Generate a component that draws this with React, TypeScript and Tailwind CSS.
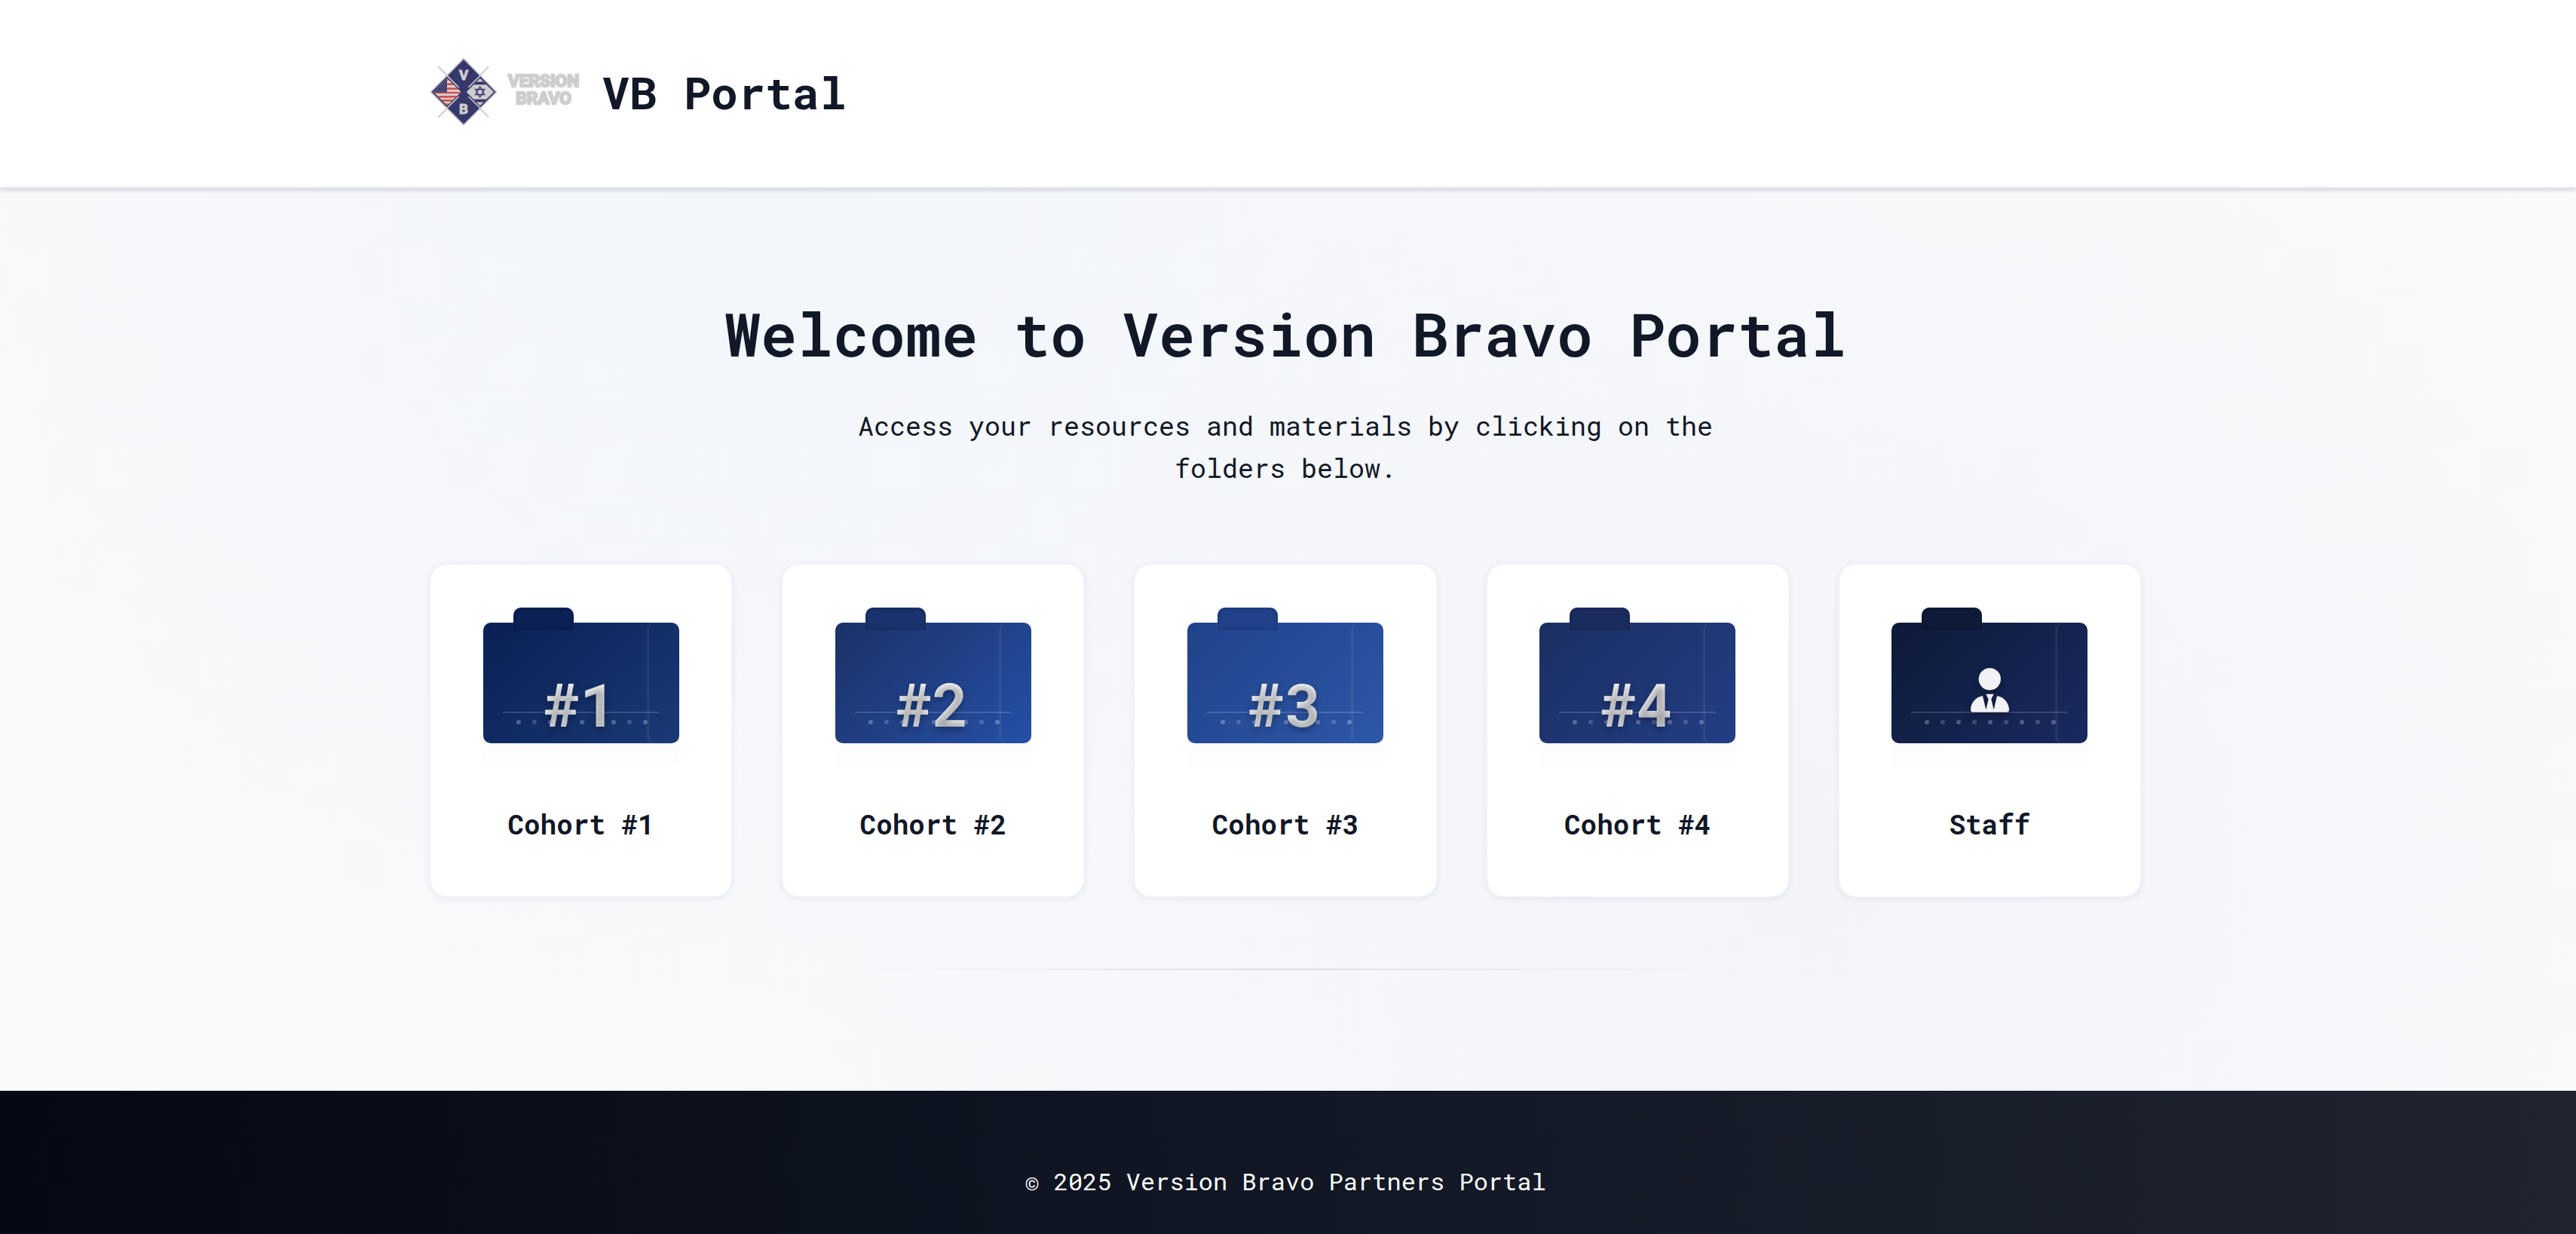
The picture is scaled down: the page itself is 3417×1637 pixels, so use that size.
import { useId } from "react";

type Folder = { label: string; mark?: string; body: string; tab: string };

const folders: Folder[] = [
  { label: "Cohort #1", mark: "#1", body: "from-[#0b2054] to-[#1a3a76]", tab: "bg-[#0b2054]" },
  { label: "Cohort #2", mark: "#2", body: "from-[#1b3268] to-[#2550a6]", tab: "bg-[#1a336c]" },
  { label: "Cohort #3", mark: "#3", body: "from-[#20438a] to-[#2e57a8]", tab: "bg-[#20428a]" },
  { label: "Cohort #4", mark: "#4", body: "from-[#1b2f62] to-[#233e86]", tab: "bg-[#1a2c5e]" },
  { label: "Staff", body: "from-[#0d1a38] to-[#1a2a60]", tab: "bg-[#0e1a38]" },
];

const band = "pr-[7px]";
const container = "mx-auto w-full max-w-[2400px] px-16";

function Star({ x, y, r }: { x: number; y: number; r: number }) {
  const h = r * 0.87;
  return (
    <g fill="none" stroke="#36376b" strokeWidth="4">
      <path d={`M${x} ${y - r}L${x + h} ${y + r / 2}H${x - h}Z`} />
      <path d={`M${x} ${y + r}L${x + h} ${y - r / 2}H${x - h}Z`} />
    </g>
  );
}

function Logo() {
  const id = useId();
  const us = `${id}-us`;
  const il = `${id}-il`;
  const stars = [];
  for (let r = 0; r < 7; r++) {
    for (let c = 0; c < 6; c++) {
      stars.push(<circle key={`${r}-${c}`} cx={80 + c * 9 + (r % 2) * 4} cy={138 + r * 8} r="1.6" fill="#cfcdce" />);
    }
  }
  return (
    <svg viewBox="54 48 606 276" className="h-[92px] w-[202px] shrink-0" role="img" aria-label="Version Bravo">
      <defs>
        <clipPath id={us}>
          <path d="M127 132L182 186L127 241L72 186Z" />
        </clipPath>
        <clipPath id={il}>
          <path d="M257 132L312 186L257 241L203 186Z" />
        </clipPath>
      </defs>
      <path d="M91 85L292 287M292 85L91 287" stroke="#c9c7c8" strokeWidth="5" />
      <path d="M192 54L322 186L192 317L62 186Z" fill="#36376b" stroke="#b9b8c2" strokeWidth="5" />
      <path d="M124 119L173 168M124 252L173 204M260 119L211 168M260 252L211 204" stroke="#cfcdce" strokeWidth="5" />
      <g clipPath={`url(#${us})`}>
        <path d="M60 120H190V250H60Z" fill="#d9d3d4" />
        <path d="M60 136H190M60 155H190M60 173H190M60 189H190M60 205H190M60 220H190M60 236H190" stroke="#d34f4c" strokeWidth="8" />
        <path d="M60 120H126V188H60Z" fill="#36376b" />
        {stars}
      </g>
      <g clipPath={`url(#${il})`}>
        <path d="M200 120H320V250H200Z" fill="#cfcdce" />
        <path d="M200 151H320M200 221H320" stroke="#36376b" strokeWidth="11" />
        <Star x={257} y={186} r={21} />
      </g>
      <g fill="#cfcdce" stroke="#cfcdce" strokeWidth="3" fontFamily="Roboto, sans-serif" fontWeight="700" textAnchor="middle">
        <text x="192" y="139" fontSize="56">V</text>
        <text x="192" y="273" fontSize="56">B</text>
      </g>
      <g fill="#cfcdce" stroke="#cfcdce" strokeWidth="7" fontFamily="Roboto, sans-serif" fontWeight="700" textAnchor="middle">
        <text x="510" y="166" fontSize="68">VERSION</text>
        <text x="510" y="233" fontSize="68">BRAVO</text>
      </g>
    </svg>
  );
}

function PersonIcon() {
  return (
    <svg viewBox="0 0 153 176" className="h-[59px] w-[51px] drop-shadow-[0_4px_4px_rgba(0,0,0,0.35)]" fill="#f2f2f5" aria-hidden="true">
      <circle cx="76" cy="44" r="44" />
      <path d="M48 111C20 114 0 140 0 166Q0 176 10 176H143Q153 176 153 166C153 140 133 114 105 111L92 166L82 124L92 104H61L71 124L61 166Z" />
    </svg>
  );
}

function FolderArt({ folder }: { folder: Folder }) {
  return (
    <div className="relative h-[160px] w-[260px]">
      <div className="absolute inset-x-0 top-full h-[30px] bg-[#fdfdfd]" />
      <div className={`absolute inset-0 overflow-hidden rounded-[10px] bg-linear-135 ${folder.body}`}>
        <div className="absolute inset-y-0 right-0 w-[42px] rounded-l-[10px] border-l-2 border-white/8 shadow-[-2px_0_4px_rgba(255,255,255,0.04)]" />
        <div className="absolute inset-x-[26px] bottom-[39px] h-[3px] rounded-t-[2px] border-t-2 border-white/15" />
        <div className="absolute bottom-[25px] left-[44px] flex gap-[15px]">
          {Array.from({ length: 9 }, (_, i) => (
            <span key={i} className={`size-[6px] rounded-full ${i % 2 ? "bg-white/18" : "bg-white/26"}`} />
          ))}
        </div>
      </div>
      <div className={`absolute -top-5 left-10 h-[30px] w-20 rounded-t-[10px] shadow-[inset_0_0_6px_rgba(0,0,0,0.2)] ${folder.tab}`} />
      {folder.mark ? (
        <div className="absolute inset-x-0 bottom-0 flex justify-center pr-[2px]">
          <span className="bg-linear-to-b from-white to-[#e5e7eb] bg-clip-text text-[80px] leading-[106px] font-bold text-transparent [text-shadow:0_4px_8px_rgba(0,0,0,0.3)]">
            {folder.mark}
          </span>
        </div>
      ) : (
        <div className="absolute inset-x-0 top-[60px] flex justify-center">
          <PersonIcon />
        </div>
      )}
    </div>
  );
}

export default function App() {
  return (
    <div className="flex min-h-screen flex-col bg-[#f9fafb] font-['Roboto_Mono','DejaVu_Sans_Mono',monospace] text-[#111827]">
      <header className={`relative z-10 border-b-2 border-[#e2e8f5] bg-white shadow-[0_2px_6px_rgba(0,0,0,0.16)] ${band}`}>
        <div className={`${container} flex h-[248px] items-center gap-7 pb-1`}>
          <Logo />
          <h1 className="text-[60px] leading-[80px] font-bold">VB Portal</h1>
        </div>
      </header>

      <main
        className={`grow bg-[radial-gradient(circle_at_30%_0%,rgba(240,244,250,0.8),transparent_55%),radial-gradient(circle_at_70%_75%,rgba(241,243,249,0.85),transparent_55%)] pt-[140px] pb-40 ${band}`}
      >
        <div className={container}>
          <h2 className="text-center text-[80px] leading-[104px] font-semibold">Welcome to Version Bravo Portal</h2>
          <p className="mx-auto mt-[42px] max-w-[1200px] text-center text-[35px] leading-[56px]">
            Access your resources and materials by clicking on the folders below.
          </p>
          <nav aria-label="Folders" className="mt-[99px] grid grid-cols-5 gap-16">
            {folders.map((f) => (
              <a
                key={f.label}
                href="#"
                className="flex flex-col items-center rounded-3xl border-2 border-[#eef2fc] bg-white pt-[77px] pb-[68px] shadow-[0_2px_8px_rgba(0,0,0,0.06)]"
              >
                <FolderArt folder={f} />
                <span className="mt-20 text-[36px] leading-[55px] font-bold">{f.label}</span>
              </a>
            ))}
          </nav>
          <hr className="mx-auto mt-[94px] h-[2px] w-[1136px] border-0 bg-linear-to-r from-transparent via-[#dddfe6] to-transparent" />
        </div>
      </main>

      <footer className={`h-[190px] bg-linear-to-r from-[#050914] via-[#111724] to-[#1f2430] pt-[94px] ${band}`}>
        <p className="text-center text-[32px] leading-[51px] text-white">© 2025 Version Bravo Partners Portal</p>
      </footer>
    </div>
  );
}
